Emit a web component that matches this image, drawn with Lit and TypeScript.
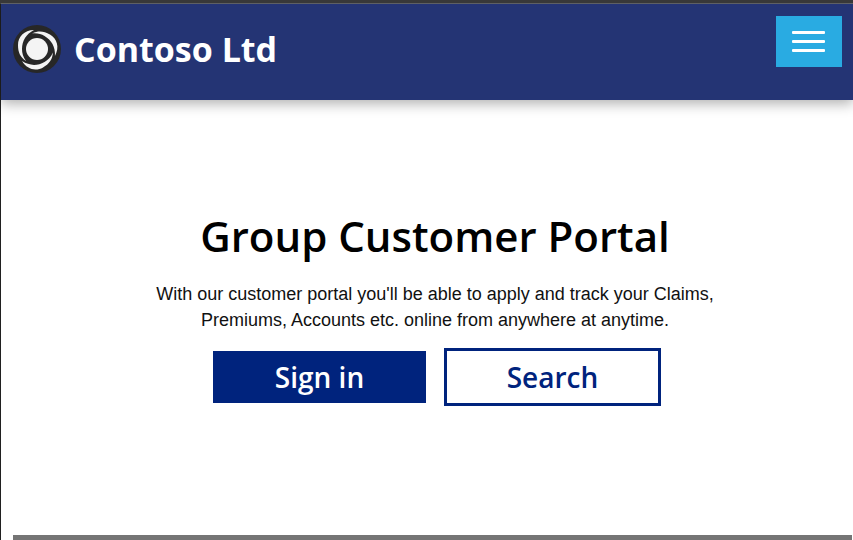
import { LitElement, html, css, svg } from "lit";
import { customElement } from "lit/decorators.js";

const blade = "M-3 -19C-13 -19 -19 -12 -19 -4C-19 3 -17 8 -11 12C-14 8 -15 4 -15 0C-15 -8 -11 -15 -3 -19Z";

@customElement("site-header")
export class SiteHeader extends LitElement {
  static styles = css`
    :host {
      display: block;
    }
    .bar {
      display: flex;
      justify-content: space-between;
      align-items: flex-start;
      box-sizing: border-box;
      min-height: 96px;
      padding: 12px 11px 12px 12px;
      background: #243474;
      box-shadow: 0 4px 12px rgba(0, 0, 0, 0.3);
    }
    .brand {
      display: flex;
      align-items: center;
      gap: 13px;
      margin-top: 8px;
      color: #fff;
      text-decoration: none;
      font: 700 34px/50px "Open Sans", "Noto Sans", sans-serif;
    }
    .logo {
      width: 48px;
      height: 48px;
      flex: none;
    }
    .menu {
      display: flex;
      flex-direction: column;
      justify-content: center;
      gap: 6px;
      width: 66px;
      height: 51px;
      padding: 0 17px 0 16px;
      border: 0;
      background: #29abe2;
    }
    .line {
      height: 3px;
      border-radius: 1px;
      background: #fff;
    }
  `;

  render() {
    return html`
      <header class="bar">
        <a class="brand" href="#">
          <svg class="logo" viewBox="-24 -24 48 48" aria-hidden="true">
            <circle r="24" fill="#272727" />
            <circle r="11" fill="#f4f4f4" />
            ${[0, 120, 240].map((a) => svg`<path d=${blade} fill="#f4f4f4" transform="rotate(${a})" />`)}
          </svg>
          <span>Contoso Ltd</span>
        </a>
        <button class="menu" type="button" aria-label="Menu">
          <span class="line"></span>
          <span class="line"></span>
          <span class="line"></span>
        </button>
      </header>
    `;
  }
}

@customElement("app-root")
export class AppRoot extends LitElement {
  static styles = css`
    :host {
      display: flex;
      flex-direction: column;
      box-sizing: border-box;
      min-height: 100vh;
      border-top: 3px solid #383838;
      background: #fff;
      overflow: hidden;
    }
    .frame {
      flex: 1;
      display: flex;
      flex-direction: column;
      border-left: 1px solid #202020;
      border-top: 1px solid #66686c;
    }
    .hero {
      flex: 1;
      display: flex;
      flex-direction: column;
      align-items: center;
      padding: 106px 12px 64px 28px;
      text-align: center;
    }
    .title {
      margin: 0;
      color: #000;
      font: 600 42px/60px "Open Sans", "Noto Sans", sans-serif;
    }
    .lead {
      max-width: 600px;
      margin: 15px 0;
      color: #111;
      font: 18px/26px "Liberation Sans", Arial, sans-serif;
    }
    .actions {
      display: flex;
      flex-wrap: wrap;
      justify-content: center;
      align-items: center;
      gap: 18px;
      padding-left: 4px;
    }
    .action {
      box-sizing: border-box;
      padding: 0;
      border: 0;
      font: 600 28px/52px "Open Sans", "Noto Sans", sans-serif;
    }
    .primary {
      width: 213px;
      background: #00237d;
      color: #fff;
    }
    .outline {
      width: 217px;
      border: 3px solid #00237d;
      background: #fff;
      color: #00237d;
    }
    .band {
      height: 5px;
      margin: 0 1px 0 12px;
      background: #757575;
    }
  `;

  render() {
    return html`
      <div class="frame">
        <site-header></site-header>
        <main class="hero">
          <h1 class="title">Group Customer Portal</h1>
          <p class="lead">
            With our customer portal you'll be able to apply and track your Claims, Premiums, Accounts etc. online from
            anywhere at anytime.
          </p>
          <div class="actions">
            <button class="action primary" type="button">Sign in</button>
            <button class="action outline" type="button">Search</button>
          </div>
        </main>
        <div class="band"></div>
      </div>
    `;
  }
}
